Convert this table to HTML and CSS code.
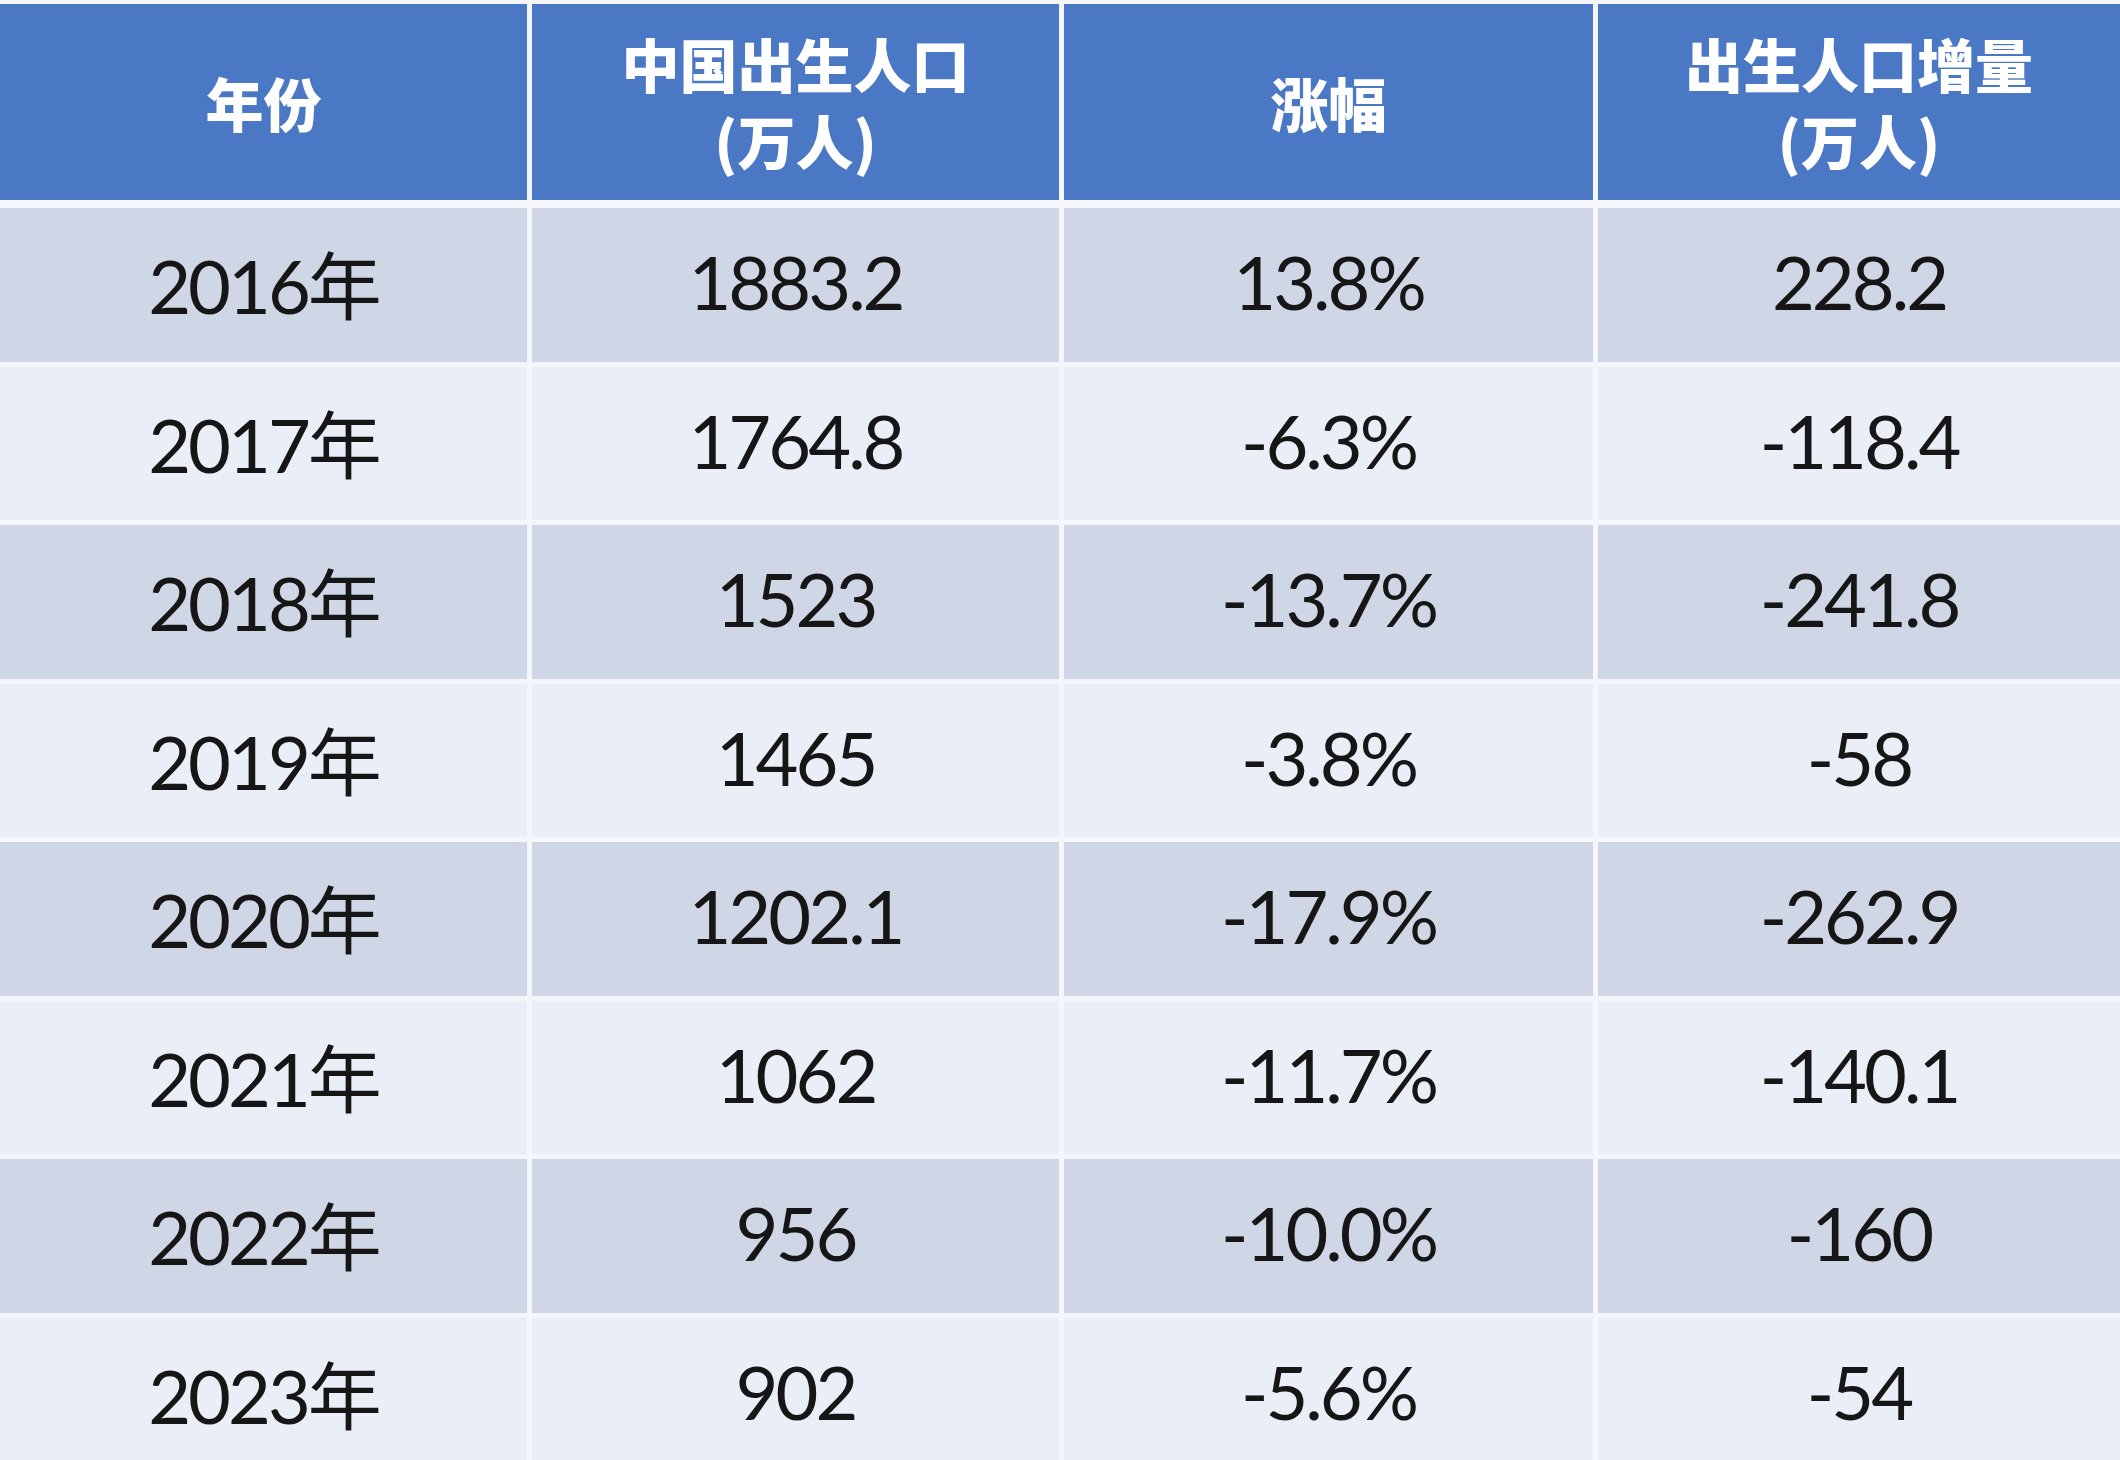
FILE: index.html
```html
<!DOCTYPE html>
<html lang="zh-CN">
<head>
<meta charset="utf-8">
<title>中国出生人口</title>
<link rel="stylesheet" href="styles.css">
</head>
<body>
<div class="table">
  <div class="row head">
    <div class="cell"><span class="line">年份</span></div>
    <div class="cell"><span class="line">中国出生人口</span><span class="line">(万人)</span></div>
    <div class="cell"><span class="line">涨幅</span></div>
    <div class="cell"><span class="line">出生人口增量</span><span class="line">(万人)</span></div>
  </div>
  <div class="row dark"><div class="cell">2016年</div><div class="cell">1883.2</div><div class="cell">13.8%</div><div class="cell">228.2</div></div>
  <div class="row light"><div class="cell">2017年</div><div class="cell">1764.8</div><div class="cell">-6.3%</div><div class="cell">-118.4</div></div>
  <div class="row dark"><div class="cell">2018年</div><div class="cell">1523</div><div class="cell">-13.7%</div><div class="cell">-241.8</div></div>
  <div class="row light"><div class="cell">2019年</div><div class="cell">1465</div><div class="cell">-3.8%</div><div class="cell">-58</div></div>
  <div class="row dark"><div class="cell">2020年</div><div class="cell">1202.1</div><div class="cell">-17.9%</div><div class="cell">-262.9</div></div>
  <div class="row light"><div class="cell">2021年</div><div class="cell">1062</div><div class="cell">-11.7%</div><div class="cell">-140.1</div></div>
  <div class="row dark"><div class="cell">2022年</div><div class="cell">956</div><div class="cell">-10.0%</div><div class="cell">-160</div></div>
  <div class="row light"><div class="cell">2023年</div><div class="cell">902</div><div class="cell">-5.6%</div><div class="cell">-54</div></div>
</div>
</body>
</html>
```
FILE: styles.css
```css
html, body {
  margin: 0;
  padding: 0;
}
body {
  width: 2120px;
  height: 1460px;
  overflow: hidden;
  background: #f4f6fb;
}
.table {
  display: flex;
  flex-direction: column;
  gap: 5px;
  padding-top: 4px;
}
.row {
  display: grid;
  grid-template-columns: 527px 527px 529px 1fr;
  column-gap: 5px;
}
.cell {
  display: flex;
  flex-direction: column;
  align-items: center;
  justify-content: center;
  text-align: center;
  box-sizing: border-box;
}
.head {
  margin-bottom: 3px;
}
.head .cell {
  height: 196px;
  background: #4a78c4;
  color: #ffffff;
  font-family: "Noto Sans CJK SC", sans-serif;
  font-weight: 900;
  font-size: 58px;
  line-height: 77px;
}
.line {
  display: block;
  line-height: 77px;
}
.dark .cell, .light .cell {
  height: 153.5px;
  padding-bottom: 6px;
  font-family: Lato, "Noto Sans CJK SC", sans-serif;
  font-size: 74px;
  letter-spacing: -3px;
  color: #161616;
}
.dark .cell {
  background: #cfd7e6;
}
.light .cell {
  background: #eaeef6;
}
```
